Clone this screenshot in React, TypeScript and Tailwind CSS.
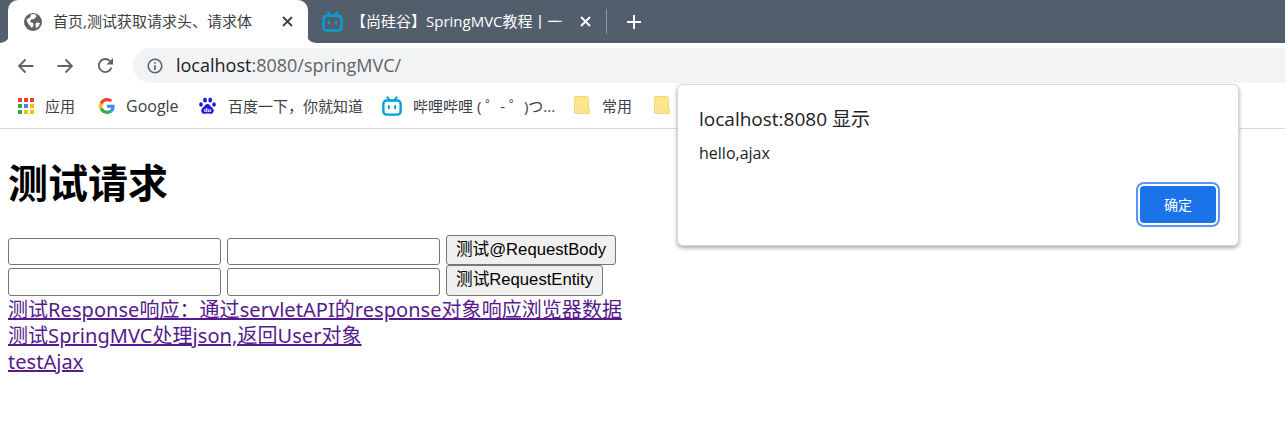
import React from "react";

const UI = "font-['Open_Sans','Noto_Sans_CJK_SC',sans-serif]";

function Bili({ c = "#00a1d6", s = 22 }: { c?: string; s?: number }) {
  return (
    <svg width={s} height={s} viewBox="0 0 22 22" fill="none" className="shrink-0">
      <path d="M6 1.500 9 5M16 1.500 13 5" stroke={c} strokeWidth="2.200" strokeLinecap="round" />
      <rect x="1.500" y="5" width="19" height="15.500" rx="3.500" stroke={c} strokeWidth="2.600" />
      <path d="M7.500 11v2.400M14.500 11v2.400" stroke={c} strokeWidth="2.200" strokeLinecap="round" />
    </svg>
  );
}

function Folder() {
  return (
    <svg width="17" height="20" viewBox="0 0 17 20" className="shrink-0">
      <path d="M2 .5h10.500a2 2 0 0 1 2 2v15H2a1.500 1.500 0 0 1-1.500-1.500V2A1.500 1.500 0 0 1 2 .5z" fill="#fde58b" stroke="#f7d675" />
      <path d="M12.500 17.500v-3a1 1 0 0 1 1-1h2v3.500a1 1 0 0 1-1 1h-2z" fill="#fde58b" stroke="#f7d675" />
    </svg>
  );
}

function Apps() {
  const colors = ["#ea4335", "#ea4335", "#ea4335", "#34a853", "#4285f4", "#fbbc05", "#34a853", "#fbbc05", "#fbbc05"];
  return (
    <div className="grid grid-cols-3 gap-[2px] w-[16px] shrink-0">
      {colors.map((c, i) => (
        <div key={i} className="w-[4px] h-[4px]" style={{ background: c }} />
      ))}
    </div>
  );
}

function GoogleG() {
  return (
    <svg width="16" height="16" viewBox="0 0 48 48" className="shrink-0">
      <path fill="#EA4335" d="M24 9.500c3.500 0 6.700 1.200 9.200 3.600l6.900-6.900C35.900 2.400 30.500 0 24 0 14.600 0 6.500 5.400 2.600 13.200l8 6.200C12.500 13.600 17.800 9.500 24 9.500z" />
      <path fill="#4285F4" d="M47 24.500c0-1.600-.1-3.100-.4-4.500H24v9h12.900c-.6 3-2.200 5.500-4.700 7.200l7.700 6C44.400 38 47 31.800 47 24.500z" />
      <path fill="#FBBC05" d="M10.500 28.600A14.500 14.500 0 0 1 10.500 19.400l-8-6.200a24 24 0 0 0 0 21.600l8-6.200z" />
      <path fill="#34A853" d="M24 48c6.500 0 11.900-2.100 15.900-5.800l-7.700-6c-2.200 1.500-5 2.300-8.200 2.300-6.200 0-11.500-4.200-13.400-9.900l-8 6.200C6.500 42.600 14.600 48 24 48z" />
    </svg>
  );
}

function Baidu() {
  return (
    <svg width="17" height="18" viewBox="0 0 17 18" className="shrink-0" fill="#2319dc">
      <ellipse cx="6" cy="3" rx="1.900" ry="2.500" />
      <ellipse cx="11.200" cy="3" rx="1.900" ry="2.500" />
      <ellipse cx="2" cy="7.500" rx="1.800" ry="2.300" />
      <ellipse cx="15" cy="7.500" rx="1.800" ry="2.300" />
      <path d="M8.500 7c-2 0-3 2.200-4.500 3.500C2.500 12 2 13 2.300 14.500 2.700 16.500 4.500 17 6 16.800c1-.1 1.700-.3 2.500-.3s1.500.2 2.500.3c1.500.2 3.300-.3 3.700-2.300.3-1.500-.2-2.500-1.700-4C11.500 9.200 10.500 7 8.500 7z" />
      <text x="8.500" y="15" fontSize="6" fill="#fff" textAnchor="middle" fontFamily="Liberation Sans" fontWeight="700">du</text>
    </svg>
  );
}

function Globe() {
  return (
    <svg width="18" height="18" viewBox="0 0 18 18" className="shrink-0">
      <circle cx="9" cy="9" r="9" fill="#5f6368" />
      <path d="M2.500 6.500 6 4.500l1-3 4-.5 1.500 2.500-2.500 2.500-3 .5-1 2.500 3 1 .5 2.500-1.500 2.500C5 12 3.500 10 2.500 6.500zM12 9.500l4 .5-1.500 3.500-2.500 1.500-.5-3z" fill="#fff" />
    </svg>
  );
}

function X({ c, s = 11 }: { c: string; s?: number }) {
  return (
    <svg width={s} height={s} viewBox="0 0 11 11" className="shrink-0">
      <path d="M1 1l9 9M10 1l-9 9" stroke={c} strokeWidth="1.800" />
    </svg>
  );
}

function Bookmark({ icon, label, w, gap = 11, wide = false }: { icon: React.ReactNode; label: string; w: string; gap?: number; wide?: boolean }) {
  return (
    <div className={`flex items-center shrink-0 ${w}`}>
      <span className="w-[17px] flex justify-center shrink-0">{icon}</span>
      <span
        className={`text-[#3c4043] whitespace-nowrap leading-none ${wide ? "text-[16px]" : "text-[15px]"}`}
        style={{ marginLeft: gap }}
      >
        {label}
      </span>
    </div>
  );
}

const inputCls = "w-[213px] bg-white border border-[#767676] rounded-[3px] shrink-0";
const btnCls =
  "bg-[#efefef] border border-[#767676] rounded-[3px] text-[16.67px] text-black leading-none shrink-0 font-['Liberation_Sans','Noto_Sans_CJK_SC',sans-serif]";
const linkCls =
  "text-[#551a8b] underline text-[20px] tracking-[0.05px] leading-[26px] w-fit whitespace-nowrap font-['Noto_Sans','Noto_Sans_CJK_SC',sans-serif]";

export default function App() {
  return (
    <div className={`relative w-[1285px] h-[448px] overflow-hidden bg-white ${UI}`}>
      {/* Tab strip */}
      <div className="h-[43px] bg-[#525e6c] flex pl-[8px]">
        <div className="relative w-[300px] h-[43px] bg-white rounded-t-[10px] flex items-center pl-[16px] pr-[15px] shrink-0">
          <svg width="10" height="10" viewBox="0 0 10 10" className="absolute -left-[8px] bottom-0">
            <path d="M0 10a10 10 0 0 0 10-10v10z" fill="#fff" />
          </svg>
          <svg width="10" height="10" viewBox="0 0 10 10" className="absolute -right-[8px] bottom-0">
            <path d="M10 10a10 10 0 0 1-10-10v10z" fill="#fff" />
          </svg>
          <Globe />
          <span className="ml-[11px] flex-1 text-[15px] text-[#3c4043] whitespace-nowrap">首页,测试获取请求头、请求体</span>
          <X c="#3c4043" />
        </div>
        <div className="w-[298px] flex items-center pl-[14px] pr-[15px] shrink-0">
          <Bili s={21} />
          <div className="relative ml-[8px] flex-1">
            <span className="block text-[15px] text-white whitespace-nowrap">【尚硅谷】SpringMVC教程丨一</span>
            <div className="absolute right-0 top-0 bottom-0 w-[14px] bg-gradient-to-r from-transparent to-[#525e6c]" />
          </div>
          <span className="w-[9px] shrink-0" />
          <X c="#ffffff" />
        </div>
        <div className="w-px h-[25px] bg-[#8d97a3] mt-[9px] shrink-0" />
        <svg width="16" height="16" viewBox="0 0 16 16" className="ml-[19px] mt-[14px] shrink-0">
          <path d="M8 1v14M1 8h14" stroke="#fff" strokeWidth="2" />
        </svg>
      </div>

      {/* Toolbar */}
      <div className="h-[45px] flex items-center bg-white">
        <div className="w-[133px] flex items-center pl-[17px] gap-[23px] shrink-0">
          <svg width="17" height="16" viewBox="0 0 17 16" fill="none" stroke="#5f6368" strokeWidth="1.800">
            <path d="M16.500 8H2M8.500 1.500 2 8l6.500 6.500" />
          </svg>
          <svg width="17" height="16" viewBox="0 0 17 16" fill="none" stroke="#5f6368" strokeWidth="1.800">
            <path d="M.5 8H15M8.500 1.500 15 8l-6.500 6.500" />
          </svg>
          <svg width="17" height="17" viewBox="0 0 17 17" fill="none">
            <path d="M14.500 10.500A6.500 6.500 0 1 1 13 4l2 2" stroke="#5f6368" strokeWidth="1.800" />
            <path d="M16 1v6.500H9.500z" fill="#5f6368" />
          </svg>
        </div>
        <div className="flex-1 h-[35px] bg-[#f1f3f4] rounded-l-[18px] flex items-center pl-[14px]">
          <svg width="16" height="16" viewBox="0 0 16 16" fill="none" className="shrink-0">
            <circle cx="8" cy="8" r="6.800" stroke="#5f6368" strokeWidth="1.600" />
            <path d="M8 7.200V12M8 4.200v1.600" stroke="#5f6368" strokeWidth="1.700" />
          </svg>
          <span className="ml-[13px] text-[18px] text-[#202124] whitespace-nowrap">
            localhost<span className="text-[#5f6368]">:8080/springMVC/</span>
          </span>
        </div>
      </div>

      {/* Bookmarks */}
      <div className="h-[41px] border-b border-[#d9dadb] flex items-center pl-[17px] pb-[4px] bg-white">
        <Bookmark icon={<Apps />} label="应用" w="w-[81px]" />
        <Bookmark icon={<GoogleG />} label="Google" w="w-[101px]" gap={11} wide />
        <Bookmark icon={<Baidu />} label="百度一下，你就知道" w="w-[184px]" gap={12} />
        <Bookmark icon={<Bili s={20} />} label="哔哩哔哩 ( ゜- ゜)つ..." w="w-[191px]" gap={13} />
        <Bookmark icon={<Folder />} label="常用" w="w-[80px]" gap={11} />
        <Bookmark icon={<Folder />} label="" w="w-[20px]" />
      </div>

      {/* Page */}
      <div className="pl-[8px] font-['Liberation_Sans','Noto_Sans_CJK_SC',sans-serif] text-black">
        <h1 className="text-[40px] font-bold leading-[46px] mt-[32px] mb-[28px]">测试请求</h1>
        <div className="flex items-end gap-[6px] h-[30px]">
          <div className={`${inputCls} h-[27px]`} />
          <div className={`${inputCls} h-[27px]`} />
          <button className={`${btnCls} w-[170px] h-[30px]`}>测试@RequestBody</button>
        </div>
        <div className="flex items-end gap-[6px] h-[31px]">
          <div className={`${inputCls} h-[28px]`} />
          <div className={`${inputCls} h-[28px]`} />
          <button className={`${btnCls} w-[157px] h-[31px]`}>测试RequestEntity</button>
        </div>
        <div className="flex flex-col pt-px">
          <a className={linkCls}>测试Response响应：通过servletAPI的response对象响应浏览器数据</a>
          <a className={linkCls}>测试SpringMVC处理json,返回User对象</a>
          <a className={linkCls}>testAjax</a>
        </div>
      </div>

      {/* Alert dialog */}
      <div className="absolute left-[677px] top-[84px] w-[562px] h-[162px] bg-white rounded-[6px] border border-[#d8d8d8] shadow-[0_2px_4px_rgba(0,0,0,0.35)] flex flex-col px-[21px] pt-[21px]">
        <div className="text-[19px] text-[#202124] leading-[26px]">localhost:8080 显示</div>
        <div className="text-[16px] text-[#202124] leading-[20px] mt-[11px]">hello,ajax</div>
        <div className="flex justify-end mt-[21px] -mr-[1px]">
          <button className="w-[80px] h-[41px] rounded-[6px] bg-[#1a73e8] text-white text-[14px] border-[2px] border-white ring-2 ring-[#5b95f5]">
            确定
          </button>
        </div>
      </div>
    </div>
  );
}
